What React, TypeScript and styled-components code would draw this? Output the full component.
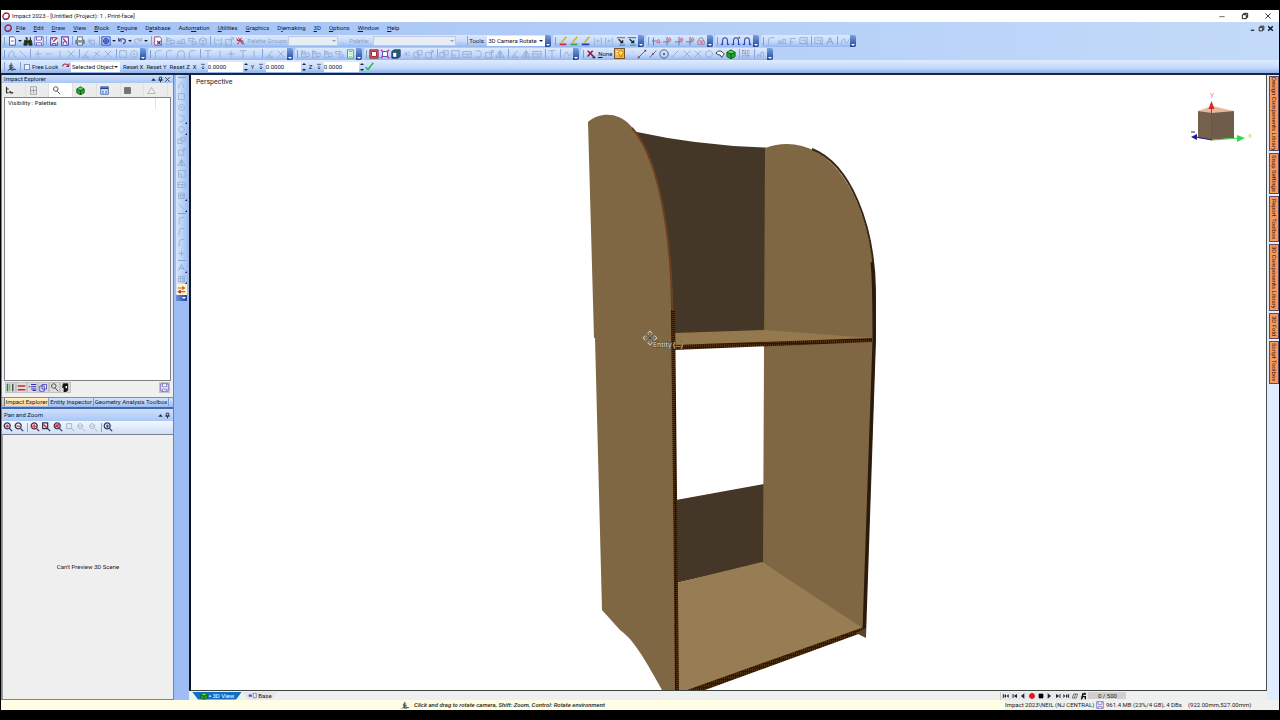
import React from 'react';
import styled, { createGlobalStyle } from 'styled-components';

const Global = createGlobalStyle`
  * { box-sizing: border-box; }
  html, body { margin: 0; padding: 0; background: #000; }
  body, button, input, select { font-family: Roboto, "Open Sans", sans-serif; font-size: 6px; line-height: 10px; color: #16202e; }
  button { border: 0; margin: 0; padding: 0; background: none; }
  svg { display: block; flex-shrink: 0; }
`;

/* ---------- icons ---------- */

type Stroke = { d: string; c?: string; f?: string; w?: number };
const G = '#8fa9cf';
const K = '#1b2233';
const R = '#d3283a';
const B = '#2440b8';
const N = '#3c3c90';

const glyphs: Record<string, Stroke[]> = {
  doc: [{ d: 'M3 1h5l2 2v8H3z', f: '#fff', c: N }, { d: 'M5 6h3', c: N }],
  binoculars: [{ d: 'M2 5h3v6H1zM7 5h3l1 6H7zM3 2h2v3M8 2h1v3M5 6h2v2H5z', f: '#23301c', c: '#23301c' }],
  save: [{ d: 'M1 1h10v10H1z', f: '#fff', c: '#5b4fb0' }, { d: 'M3 1v4h6V1M3 11V8h6v3', c: '#5b4fb0' }],
  exportA: [{ d: 'M9 2H2v9h8V7', f: '#fff', c: '#5b3fb0', w: 1.3 }, { d: 'M5 7l5-5', c: R, w: 1.6 }, { d: 'M4 11V9h4v2M4 2v3', c: B }],
  exportB: [{ d: 'M2 1h8v10H2z', f: '#fff', c: '#5b3fb0', w: 1.3 }, { d: 'M4 3l3 4', c: R, w: 1.6 }, { d: 'M4 10V7h4v3', c: B }],
  print: [{ d: 'M1 5h10v4H1z', f: '#8a94a0', c: '#56606c' }, { d: 'M3 5V1h6v4M3 8v3h6V8', f: '#eef3fa', c: '#56606c' }],
  stack: [{ d: 'M2 6h4M4 3v6M6 5h4v5H6z', c: G }],
  globe: [{ d: 'M1 1h10v10H1z', f: '#b7cffa', c: '#2747a8' }, { d: 'M6 3a3 3 0 1 0 .1 0M3 6h6M6 3v6', c: B, w: 1.3 }],
  undo: [{ d: 'M2 2v4h4M2 6c3-4 8-3 8 0s-2 3-3 3', c: N, w: 1.3 }],
  redo: [{ d: 'M10 2v4H6M10 6C7 2 2 3 2 6s2 3 3 3', c: G, w: 1.2 }],
  sheet: [{ d: 'M2 1h6l2 2v8H2z', f: '#fff', c: '#a02b62' }, { d: 'M5 6l4 4M9 6l-4 4', c: B, w: 1.5 }],
  align: [{ d: 'M2 1v10M3 3h3v3H3zM7 5h4v4H7zM3 10h5', c: G }],
  flag: [{ d: 'M1 9h10M2 9V6h3v3M7 9V4h3v5', c: G }],
  nodes: [{ d: 'M2 3h5v3H2zM6 7h5v3H6zM7 2l3 3', c: G }],
  cubeOff: [{ d: 'M2 4l4-2 4 2v5l-4 2-4-2zM2 4l4 2 4-2M6 6v5', c: G }],
  link: [{ d: 'M2 2v8h3M10 2v8H7M4 5h4', c: G }],
  people: [{ d: 'M4 2l5 8M2 5l8 1M8 2L3 10', c: R, w: 1.2 }, { d: 'M2 3l2 3M8 6l3 4', c: '#444' }],
  arc: [{ d: 'M2 10C2 4 5 2 10 2', c: G }],
  curve: [{ d: 'M2 10C2 1 8 1 8 5s1 4 3 5', c: G }],
  line: [{ d: 'M2 2l8 8', c: G }],
  plus: [{ d: 'M6 2v8M2 6h8', c: G }],
  minus: [{ d: 'M2 6h8', c: G }],
  vert: [{ d: 'M6 2v8', c: G }],
  cross: [{ d: 'M2 2l8 8M10 2l-8 8', c: G }],
  tang: [{ d: 'M2 10L9 2M2 10h8M5 6l3 4', c: G }],
  perp: [{ d: 'M2 10L9 2M3 4l6 4', c: G }],
  rect: [{ d: 'M2 2h8v8H2z', c: G }],
  circ: [{ d: 'M6 2a4 4 0 1 0 .1 0M6 5v2M5 6h2', c: G }],
  corner: [{ d: 'M3 11V5q0-3 3-3h4', c: G }],
  arch: [{ d: 'M2 11V5q0-3 4-3t4 3v6', c: G }],
  tee: [{ d: 'M2 2h8M6 2v9', c: G }],
  boxes: [{ d: 'M1 4h6v6H1zM5 2h6v5H5z', c: G }],
  boxIn: [{ d: 'M2 2h9v9H2zM2 7h4v4', c: G }],
  wide: [{ d: 'M1 3h10v7H1zM1 6h10M7 6v4', c: G }],
  dee: [{ d: 'M3 2h2q5 0 5 4t-5 4H3', c: G }],
  turn: [{ d: 'M2 4h7v7H2zM6 7l5-5M8 2h3v3', c: G }],
  mirror: [{ d: 'M6 1v10M5 3v7H1zM7 3v7h4z', c: G }],
  hatch: [{ d: 'M2 3h8v7H2zM2 6h8M5 3v7M8 3v7', c: G }],
  calc: [{ d: 'M3 1h7v10H3z', f: '#e8fff0', c: '#279b62' }, { d: 'M5 3h3M5 6h1M5 9h1M7 6h1M7 9h1', c: '#279b62' }],
  redBox: [{ d: 'M1 1h10v10H1z', f: '#e0606a', c: '#8c1822' }, { d: 'M3 3h6v6H3z', f: '#fff', c: '#8c1822' }],
  pinkBox: [{ d: 'M3 3h6v6H3z', f: '#fff', c: B }, { d: 'M1 1l3 3M11 1L8 4M1 11l3-3M11 11L8 8', c: '#cf2aa4', w: 1.6 }],
  tealBox: [{ d: 'M1 3l3-2h7v8l-3 2H1z', f: '#1b6a6e', c: '#142c76' }, { d: 'M2 4h5v6H2z', f: '#fff', c: '#142c76' }],
  zig: [{ d: 'M2 8l3-4v4l4-5M7 9l3-3', c: G }],
  penRed: [{ d: 'M4 8l6-7', c: '#dfaa2c', w: 1.8 }, { d: 'M2 10h8', c: R, w: 2 }],
  penGreen: [{ d: 'M4 8l6-7', c: '#dfaa2c', w: 1.8 }, { d: 'M2 10h8', c: '#2fb04a', w: 2 }],
  penBlue: [{ d: 'M4 8l6-7', c: '#dfaa2c', w: 1.8 }, { d: 'M1 10h9', c: '#1c3ec0', w: 2 }],
  bars: [{ d: 'M2 2v8M10 2v8M4 6h4M6 4v4', c: G }],
  swapA: [{ d: 'M1 2h10', c: '#d9606c', w: 1.5 }, { d: 'M3 4l5 4M8 5v3H5', c: K, w: 1.5 }, { d: 'M4 11h7', c: '#2f9f9a', w: 1.5 }],
  swapB: [{ d: 'M1 2h10', c: '#3c9f5a', w: 1.5 }, { d: 'M3 4l5 4M8 5v3H5', c: K, w: 1.5 }, { d: 'M4 11h7', c: '#2f9f9a', w: 1.5 }],
  dim: [{ d: 'M3 2v9M1 6h6', c: '#5a6c94' }, { d: 'M7 8l2-4 2 4z', c: '#c8546a' }],
  dimB: [{ d: 'M6 1v10M1 7h9', c: '#5a6c94' }, { d: 'M7 5l2-3 2 3z', c: '#c8546a' }],
  lock: [{ d: 'M2 6h8v4H2zM3 6q0-4 3-4t3 4', c: '#a37390' }, { d: 'M5 8h3', c: R }],
  wave: [{ d: 'M1 10h2V6q0-4 3-4t3 4v4h2', c: '#2b46b4', w: 1.3 }],
  waveDot: [{ d: 'M1 10h2V6q0-4 3-4t3 4v4h2', c: '#2b46b4', w: 1.3 }, { d: 'M9 2h2', c: R, w: 2 }],
  letterF: [{ d: 'M3 11V3h6M3 7h4', c: G }],
  letterA: [{ d: 'M2 10L6 2l4 8M4 7h4', c: G, w: 1.3 }],
  table: [{ d: 'M1 2h9v7H1zM3 5h5v4M8 9l3 2', c: G }],
  squiggle: [{ d: 'M1 9c3-7 4-7 5-3s3 3 5-2', c: G }],
  redX: [{ d: 'M2 2l7 7M8 2L2 9', c: '#8d1530', w: 1.8 }, { d: 'M8 10h3', c: K, w: 2 }],
  bulb: [{ d: 'M7 2a2.5 2.5 0 0 1 1 5v2H6V7a2.5 2.5 0 0 1 1-5z', f: '#ffe23c', c: '#b37a12' }, { d: 'M1 3h3M1 6h3', c: '#fff' }],
  dots: [{ d: 'M3 8h1M7 4h1', c: G }],
  segment: [{ d: 'M2 10l8-8', c: '#4a5468' }, { d: 'M1 10h2M9 2h2', c: '#9c2740', w: 2 }],
  mid: [{ d: 'M2 10l8-8', c: '#4a5468' }, { d: 'M5 6h2', c: '#9c2740', w: 2 }],
  centre: [{ d: 'M6 1a5 5 0 1 0 .1 0', c: '#465064' }, { d: 'M5 6h2', c: K, w: 2 }],
  ring: [{ d: 'M6 2a4 4 0 1 0 .1 0', c: G }],
  slash: [{ d: 'M2 10l8-8', c: G }],
  shell: [{ d: 'M1 5q5-6 10 1L8 10 6 7 4 7z', f: '#fff', c: K }],
  cube: [{ d: 'M1 4l5-3 5 3v5l-5 3-5-3z', f: '#25a02c', c: '#0b5a16' }, { d: 'M1 4l5 2 5-2M6 6v6', c: '#0b4a12' }, { d: 'M2 4l4-2 4 2-4 1z', f: '#59dc4f', c: 'none' }],
  grid: [{ d: 'M1 2h10M1 5h10M1 8h10M2 1v10M5 1v10M8 1v10', c: '#a4acc8' }, { d: 'M2 2h1M5 5h1M8 8h1', c: R }],
  stairs: [{ d: 'M2 10V7h3v3M6 10V4h3v6', c: G }],
  axes: [{ d: 'M5 1v7L1 10M5 8l6 1M3 4h4M3 7l5-1M3 4l2 6 4-1', c: '#25304a' }],
  rotate: [{ d: 'M2 6c1-5 7-4 8 0M7 6h3l1-4', c: '#a12944', w: 1.4 }],
  spin: [{ d: 'M3 2h6M6 4v5M4 7l2 2 2-2', c: '#3b4864', w: 1.2 }],
  check: [{ d: 'M1 7l3 3 7-9', c: '#20b83a', w: 1.8 }],
  tree: [{ d: 'M2 1v8h3M2 4h3M6 7l4 3M6 9h5', c: '#2b2b2b', w: 1.5 }],
  form: [{ d: 'M2 1h8v10H2zM2 6h8M6 3v6', c: '#8a8f98' }],
  magnifier: [{ d: 'M5 1a3 3 0 1 0 .1 0M7 7l4 4', c: '#4a4a4a', w: 1.3 }],
  window: [{ d: 'M1 1h10v10H1z', f: '#dfe9ff', c: '#1d4693' }, { d: 'M1 3h10', c: '#1d4693', w: 2.4 }, { d: 'M3 7h2M7 7h2M3 9h2M7 9h2', c: '#1d4693' }],
  filled: [{ d: 'M2 2h8v8H2z', f: '#737373', c: '#666' }],
  triangle: [{ d: 'M6 2l5 8H1z', c: '#a5a5a5' }],
  stripes: [{ d: 'M2 1v10', c: '#23824a', w: 2 }, { d: 'M5 1v10', c: '#8ccf3c', w: 2 }, { d: 'M9 1v10', c: '#48566e', w: 2 }],
  redBars: [{ d: 'M1 4h10M1 9h10', c: '#c92a28', w: 2.2 }],
  list: [{ d: 'M4 2h7M4 5h7M4 8h7M6 10h5M1 5h2', c: '#342fb4', w: 1.4 }],
  copies: [{ d: 'M1 4h6v7H1zM4 2h6v6H4z', f: '#e4e8ff', c: '#342fb4' }],
  mask: [{ d: 'M3 1h6v9H7v2H4V6H2z', f: '#111', c: '#111' }, { d: 'M6 4h2v3H6z', f: '#fff', c: 'none' }],
  zoomIn: [{ d: 'M5 1a3.6 3.6 0 1 0 .1 0M8 8l3 3', c: '#30344a', w: 1.5 }, { d: 'M3 5h4M5 3v4', c: R, w: 1.4 }],
  zoomOut: [{ d: 'M5 1a3.6 3.6 0 1 0 .1 0M8 8l3 3', c: '#30344a', w: 1.5 }, { d: 'M3 5h4', c: R, w: 1.4 }],
  zoomAll: [{ d: 'M5 1a3.6 3.6 0 1 0 .1 0M8 8l3 3', c: '#30344a', w: 1.5 }, { d: 'M1 5h8M5 1v8', c: R, w: 1.2 }],
  zoomBox: [{ d: 'M2 1h6v7H2zM8 8l3 3', c: '#30344a', w: 1.5 }, { d: 'M3 3l4 4', c: R, w: 1.8 }],
  zoomNo: [{ d: 'M5 1a3.6 3.6 0 1 0 .1 0M8 8l3 3', c: '#30344a', w: 1.5 }, { d: 'M2 7l6-5M3 3l4 4', c: R, w: 1.8 }],
  zoomOff: [{ d: 'M5 2a3 3 0 1 0 .1 0M8 8l3 3M3 5h4', c: '#9ba7b8' }],
  zoomOffBox: [{ d: 'M2 2h6v6H2zM8 8l3 3', c: '#9ba7b8' }],
  zoomBlue: [{ d: 'M5 1a3.6 3.6 0 1 0 .1 0M8 8l3 3', c: '#30344a', w: 1.5 }, { d: 'M5 3v4M4 5h3', c: B, w: 1.6 }],
  swap: [{ d: 'M1 4h9M7 2l3 2-3 2', c: '#d0661e', w: 1.6 }, { d: 'M11 9H2M5 7L2 9l3 2', c: '#b93024', w: 1.6 }],
  pin: [{ d: 'M4 2h4v5H4zM2 7h8M6 7v4', c: '#222a3c', w: 1.5 }],
  up: [{ d: 'M2 8l4-4 4 4z', f: '#222a3c', c: 'none' }],
  close: [{ d: 'M2 2l8 8M10 2l-8 8', c: '#27344e', w: 1.4 }],
  min: [{ d: 'M2 7h8', c: '#222' }],
  minBold: [{ d: 'M3 9h6', c: '#10182c', w: 2 }],
  restore: [{ d: 'M2 4h6v6H2zM4 4V2h6v6H8', c: '#111', w: 1.4 }],
  closeBold: [{ d: 'M2 2l8 8M10 2l-8 8', c: '#10182c', w: 2.4 }],
  first: [{ d: 'M2 3v6', c: K, w: 1.4 }, { d: 'M6 3v6L3 6zM10 3v6L7 6z', f: K, c: 'none' }],
  prev: [{ d: 'M3 3v6', c: K, w: 1.4 }, { d: 'M9 3v6L4 6z', f: K, c: 'none' }],
  back: [{ d: 'M8 2v8L3 6z', f: K, c: 'none' }],
  record: [{ d: 'M6 2a4 4 0 1 0 .1 0', f: '#dd1616', c: '#dd1616' }],
  stop: [{ d: 'M3 3h6v6H3z', f: '#000', c: '#000' }],
  play: [{ d: 'M4 2v8l5-4z', f: K, c: 'none' }],
  next: [{ d: 'M9 3v6', c: K, w: 1.4 }, { d: 'M3 3v6l5-3z', f: K, c: 'none' }],
  last: [{ d: 'M10 3v6', c: K, w: 1.4 }, { d: 'M2 3v6l3-3zM6 3v6l3-3z', f: K, c: 'none' }],
  loop: [{ d: 'M2 9l2-6h6L8 9zM5 9l2-6', c: '#444' }],
  runner: [{ d: 'M3 3h6M5 3l-2 4h5v4M4 7l-2 4M7 1v3', c: '#111', w: 2 }],
  layers: [{ d: 'M1 6h4', c: '#5a3fc8', w: 3 }, { d: 'M7 3h4v6H7z', f: '#efeaff', c: '#7a63c8' }],
};

const Icon = ({ name, size = 10 }: { name: string; size?: number }) => (
  <svg width={size} height={size} viewBox="0 0 12 12" fill="none" aria-hidden="true">
    {(glyphs[name] || []).map((s, i) => (
      <path key={i} d={s.d} stroke={s.c} fill={s.f || 'none'} strokeWidth={s.w || 1} />
    ))}
  </svg>
);

/* ---------- frame ---------- */

const Screen = styled.div`
  min-height: 100vh; padding: 10px 1px; background: #000;
  display: flex; flex-direction: column;
`;
const Shell = styled.div`flex: 1; display: flex; flex-direction: column; background: #a0bff4; min-width: 0;`;
const TitleBar = styled.header`
  height: 12px; padding: 0 7px 0 1px; display: flex; align-items: center; gap: 2px; background: #fff; color: #222;
`;
const Title = styled.h1`margin: 0; font-size: 6px; line-height: 12px; font-weight: 400; flex: 1; white-space: nowrap;`;
const WindowButtons = styled.div<{ $gap: number }>`display: flex; align-items: center; gap: ${p => p.$gap}px;`;
const WinButton = styled.button`display: flex; align-items: center; justify-content: center;`;

const MenuBar = styled.nav`
  height: 12px; padding: 0 5px 0 3px; display: flex; align-items: center;
  background: linear-gradient(90deg, #a3c1f5, #c3daf9);
`;
const MenuItems = styled.div`display: flex; align-items: center; flex: 1; gap: 8px; padding-left: 4px;`;
const MenuItem = styled.button`line-height: 12px; white-space: nowrap; color: #0c1a3a;`;

const Bar = styled.div<{ $plain?: boolean }>`
  height: 13px; display: flex; align-items: center; gap: ${p => (p.$plain ? 1 : 2)}px; padding: 0 1px; min-width: 0;
  background: ${p => (p.$plain ? 'linear-gradient(#deebff, #c4dafa 60%, #8db2ee)' : 'linear-gradient(90deg, #a3c1f5, #c3daf9)')};
`;
const Group = styled.div<{ $w: number }>`
  flex: 0 0 ${p => p.$w}px; height: 12px; display: flex; align-items: center; overflow: hidden;
  border-radius: 2px; background: linear-gradient(#dce9fe, #c5dafa 55%, #94b6ee);
  &::before { content: ''; flex: 0 0 1px; height: 8px; margin: 0 1px 0 2px; background: #7b9bd2; }
`;
const Tool = styled.button<{ $hot?: boolean }>`
  flex: 1 1 11px; min-width: 0; height: 11px; display: flex; align-items: center; justify-content: center;
  ${p => p.$hot && 'background: #f8b04e; border: 1px solid #74552f;'}
`;
const Sep = styled.span`flex: 0 0 1px; height: 9px; margin: 0 1px 0 2px; background: #86a4d8;`;
const Caret = styled.span`
  flex: 0 0 5px; display: flex; justify-content: center;
  &::after { content: ''; border: 2px solid transparent; border-top-color: #1c2538; border-bottom: 0; }
`;
const Overflow = styled.span`
  flex: 0 0 6px; align-self: stretch; margin-left: auto; display: flex; align-items: flex-end; justify-content: center;
  background: linear-gradient(#7ba0e2, #1f4796); padding-bottom: 1px;
  &::after { content: ''; border: 2px solid transparent; border-top-color: #fff; border-bottom: 0; }
`;
const Label = styled.label<{ $off?: boolean; $w?: number }>`
  white-space: nowrap; flex: 0 0 ${p => (p.$w ? p.$w + 'px' : 'auto')};
  color: ${p => (p.$off ? '#8b9fc0' : '#101828')};
`;
const PickBox = styled.span<{ $w: number; $off?: boolean }>`
  position: relative; flex: 0 0 ${p => p.$w}px; height: 10px; display: flex; align-items: center;
  background: ${p => (p.$off ? '#e8edf4' : '#fff')}; border: 1px solid ${p => (p.$off ? '#bccbe2' : '#fff')};
  &::after {
    content: ''; position: absolute; right: 1px; top: 3px; border: 2px solid transparent; border-bottom: 0;
    border-top-color: ${p => (p.$off ? '#8b9fc0' : '#1c2538')};
  }
`;
const Pick = styled.select`
  appearance: none; width: 100%; height: 8px; padding: 0; border: 0; background: none; line-height: 8px; color: #101828;
`;
const Check = styled.input`appearance: none; margin: 0 1px; width: 6px; height: 6px; border: 1px solid #8294b4; background: #eef4ff;`;
const Field = styled.input`
  flex: 0 0 35px; width: 35px; height: 10px; border: 0; padding: 0; background: #fff; color: #101828;
`;
const Spinner = styled.span`
  flex: 0 0 4px; height: 8px; display: flex; flex-direction: column; justify-content: space-between; align-items: center;
  &::before { content: ''; border: 2px solid transparent; border-top: 0; border-bottom-color: #1c2538; }
  &::after { content: ''; border: 2px solid transparent; border-bottom: 0; border-top-color: #1c2538; }
`;
const TextButton = styled.button<{ $w: number }>`
  flex: 0 0 ${p => p.$w}px; padding-left: 2px; white-space: nowrap; text-align: left; color: #101828;
`;
const Underlined = styled.span`text-decoration: underline;`;

/* ---------- body ---------- */

const Body = styled.main`flex: 1; display: flex; border-top: 2px solid #1a2740; min-height: 0;`;
const Dock = styled.aside`
  flex: 0 0 173px; min-width: 0; display: flex; flex-direction: column; background: #f0f0f0;
  border: 1px solid #5f86c8; border-top: 0;
`;
const DockHeader = styled.h2<{ $h: number }>`
  margin: 0; height: ${p => p.$h}px; padding: 0 2px; display: flex; align-items: center;
  font-size: 6px; line-height: 8px; font-weight: 400; background: linear-gradient(#cfe0fb, #a9c7f5); color: #0d1a34;
`;
const Grow = styled.span`flex: 1;`;
const DockTabs = styled.div`height: 14px; display: flex; background: #ececec; padding-right: 5px;`;
const DockTab = styled.button<{ $on?: boolean }>`
  flex: 1; display: flex; align-items: center; justify-content: center; padding-right: 8px;
  background: ${p => (p.$on ? '#fff' : '#ececec')}; border-right: 1px solid #e0e0e0;
`;
const ListPane = styled.div`
  flex: 0 0 284px; margin: 0 2px; border: 1px solid #7d828a; background: #fff; display: flex; line-height: 10px;
`;
const ListName = styled.div`flex: 1; padding-left: 3px; color: #222;`;
const ListEdge = styled.div`flex: 0 0 15px; height: 11px; border-left: 1px solid #e3e3e3;`;
const PaneTools = styled.div`height: 16px; padding: 1px 3px 0; display: flex; align-items: flex-start;`;
const PaneTool = styled.button`
  width: 11px; height: 11px; display: flex; align-items: center; justify-content: center;
  background: #dcdcdc; border: 1px solid #c4c4c4;
`;
const PaneTabs = styled.div`
  height: 12px; display: flex; align-items: stretch; padding: 0 2px 1px;
  background: linear-gradient(#d6e5fc, #9dbdf0); border-top: 1px solid #6a8fd0; border-bottom: 2px solid #4169b0;
`;
const PaneTab = styled.button<{ $on?: boolean; $w: number }>`
  flex: 0 0 ${p => p.$w}px; line-height: 8px; white-space: nowrap; border-right: 1px solid #7f9dcb;
  ${p => p.$on && 'background: linear-gradient(#fff0c8, #ffd590); border-left: 1px solid #8b7446;'}
`;
const ZoomStrip = styled.div`height: 13px; background: linear-gradient(#f2f7ff, #cfdff8);`;
const ZoomTools = styled.div`width: 112px; height: 12px; display: flex; align-items: center;`;
const ZoomTool = styled.button`flex: 1; display: flex; justify-content: center;`;
const Preview = styled.div`
  flex: 1; border-top: 1px solid #7d828a; border-left: 1px solid #9aa0a8; background: #efefef;
  display: flex; align-items: center; justify-content: center; color: #222;
`;
const SideBar = styled.div`flex: 0 0 15px; padding: 0 2px; background: #9ebdf4;`;
const SideTools = styled.div`
  width: 11px; display: flex; flex-direction: column; align-items: center; padding-top: 2px;
  background: linear-gradient(90deg, #d8e6fd, #a5c3f4);
  &::before { content: ''; width: 8px; height: 1px; background: #7b9bd2; margin-bottom: 2px; }
`;
const SideTool = styled.button<{ $hot?: boolean; $more?: boolean }>`
  position: relative; width: 10px; height: 11px; display: flex; align-items: center; justify-content: center;
  background: ${p => (p.$hot ? '#fdf3cf' : 'none')};
  ${p => p.$more && `&::after { content: ''; position: absolute; right: 0; bottom: 0; border: 1px solid #1c2538; border-top-color: transparent; border-left-color: transparent; }`}
`;
const SideSep = styled.span`width: 8px; height: 1px; margin: 1px 0; background: #86a4d8;`;
const SideEnd = styled.span`
  align-self: stretch; height: 6px; background: linear-gradient(90deg, #6c92da, #1f4796);
  display: flex; justify-content: flex-end; align-items: center; padding-right: 1px;
  &::after { content: ''; border: 2px solid transparent; border-top-color: #fff; border-bottom: 0; }
`;
const View = styled.section`flex: 1; min-width: 0; display: flex; flex-direction: column; background: #eef0f0;`;
const Canvas = styled.div`
  position: relative; flex: 1; min-height: 0; background: #fff; overflow: hidden;
  border-left: 2px solid #10141c; border-right: 1px solid #4c504c; border-bottom: 1px solid #3c443c;
  > svg { position: absolute; inset: 0; width: 100%; height: 100%; }
`;
const CameraName = styled.span`position: absolute; left: 5px; top: 2px; font-size: 7px; color: #222;`;
const ViewTabs = styled.div`height: 9px; display: flex; align-items: center; padding-left: 3px;`;
const ViewTab = styled.button<{ $on?: boolean; $w: number }>`
  width: ${p => p.$w}px; height: 8px; display: flex; align-items: center; justify-content: center; gap: 1px; line-height: 8px;
  clip-path: polygon(0 0, 100% 0, calc(100% - 6px) 100%, 6px 100%);
  background: ${p => (p.$on ? '#0f6fc4' : '#e2e4e8')}; color: ${p => (p.$on ? '#fff' : '#222')};
`;
const Player = styled.div`display: flex; align-items: center; border-left: 1px solid #c8c8c8; padding-left: 1px; margin-right: 141px;`;
const PlayerButtons = styled.div`width: 86px; display: flex; align-items: center;`;
const PlayerButton = styled.button`
  flex: 1; height: 8px; display: flex; align-items: center; justify-content: center; background: #e6e8e9;
`;
const Frame = styled.output`width: 38px; height: 7px; line-height: 7px; padding-left: 10px; background: #cfcfcf; color: #222;`;

const RightDock = styled.aside`
  flex: 0 0 12px; background: #dfecff; padding: 1px 0 0 2px; display: flex; flex-direction: column; gap: 2px;
`;
const RightTab = styled.button<{ $h: number }>`
  width: 10px; flex: 0 0 ${p => p.$h}px; min-height: 0; writing-mode: vertical-rl; text-align: center; line-height: 8px;
  white-space: nowrap; background: #f79a58; border: 1px solid #5d4a68; color: #1c1420;
`;

const StatusBar = styled.footer`height: 10px; display: flex; background: #f0f1ee; color: #222; line-height: 10px; white-space: nowrap;`;
const Hint = styled.div`
  flex: 1; display: flex; align-items: center; justify-content: center; gap: 4px; background: #fffde4;
  font-style: italic; font-weight: 500;
`;
const StatusCell = styled.div<{ $w: number }>`flex: 0 0 ${p => p.$w}px; display: flex; align-items: center; gap: 2px;`;

/* ---------- data ---------- */

const menus = [
  ['', 'F', 'ile'], ['', 'E', 'dit'], ['', 'D', 'raw'], ['', 'V', 'iew'], ['', 'B', 'lock'], ['E', 'n', 'quire'],
  ['D', 'a', 'tabase'], ['Auto', 'm', 'ation'], ['', 'U', 'tilities'], ['', 'G', 'raphics'], ['D', 'i', 'emaking'],
  ['', '3', 'D'], ['', 'O', 'ptions'], ['', 'W', 'indow'], ['', 'H', 'elp'],
];

const Tools = ({ items }: { items: string }) => (
  <>
    {items.split(' ').map((n, i) =>
      n === '|' ? <Sep key={i} /> : n === 'v' ? <Caret key={i} /> : (
        <Tool key={i} $hot={n === 'bulb'} aria-label={n}><Icon name={n} /></Tool>
      ),
    )}
  </>
);

const topGroups: [number, string][] = [
  [91, 'penRed penGreen penBlue bars bars swapA swapB'],
  [67, 'dim dimB dimB dimB lock'],
  [44, 'wave waveDot wave'],
  [95, 'corner flag letterF table | table letterA | squiggle'],
];
const drawGroups: [number, string][] = [
  [144, 'curve line | plus minus vert cross | tang perp cross | rect circ'],
  [145, 'corner corner arch corner | tee vert plus tee vert | tang cross'],
  [67, 'align align align nodes calc'],
  [215, 'redBox pinkBox tealBox zig boxes turn | boxes boxIn wide dee turn mirror | tang mirror wide | tee | squiggle'],
];

const sideTools = ['curve', 'rect', 'circ', 'dee+', 'ring+', 'boxes', 'turn', 'mirror', 'boxIn', 'wide', 'hatch+', 'line+', '|',
  'corner', 'corner', 'corner', 'plus', '|', 'letterA+', 'hatch+', 'swap'];

const rightTabs: [string, number][] = [
  ['Design Components Library', 75], ['Snap Settings', 41], ['Report Toolbox', 46],
  ['3D Components Library', 67], ['3D Fold', 26], ['Script Toolbox', 43],
];

const Logo = ({ size }: { size: number }) => (
  <svg width={size} height={size} viewBox="0 0 12 12" fill="none" aria-hidden="true">
    <path d="M9 2C4 0 0 5 2 9s8 2 9-3c0-2-1-3-2-4" stroke="#b01f38" strokeWidth="2" />
    <path d="M3 10c4 2 8-1 8-5" stroke="#46508c" strokeWidth="1.4" />
  </svg>
);

const Scene = () => (
  <svg viewBox="191 75 1075 615" preserveAspectRatio="xMidYMid slice" role="img" aria-label="Cardboard display stand">
    <defs>
      <pattern id="flute" width="4" height="2" patternUnits="userSpaceOnUse">
        <rect width="4" height="2" fill="#24160a" /><rect width="3" height="1" fill="#50351a" />
      </pattern>
      <pattern id="fluteH" width="2" height="4" patternUnits="userSpaceOnUse">
        <rect width="2" height="4" fill="#2c180a" /><rect width="1" height="3" fill="#4e3015" />
      </pattern>
    </defs>
    <path d="M632 131Q700 146 766 147.500V332L672 336Z" fill="#443727" />
    <path d="M676 500L764 484V563L676 583Z" fill="#443727" />
    <path d="M765 148Q784 141 802 146C846 157 873 220 875 290L865 633L763 563Z" fill="#7f6744" />
    <path d="M812 149C850 164 874 224 875 290V340L865 637" fill="none" stroke="#3a2613" strokeWidth="2" />
    <path d="M872 262C874 280 874 300 874 340L864 630" fill="none" stroke="#2b1a0c" strokeWidth="3" />
    <path d="M674 333L765 330L872 338L872 342L674 348Z" fill="#94794f" />
    <path d="M674 345L872 338V342L674 350Z" fill="url(#fluteH)" />
    <path d="M676 583L762 562L864 629L690 690H676Z" fill="#987d54" />
    <path d="M864 627V632L705 690H687Z" fill="url(#fluteH)" />
    <path d="M856 633L866 628V638Z" fill="#5a442c" />
    <path d="M588 122C600 112 618 112 630 125C656 150 671 220 673 310L678 690H662C640 650 632 639 620 630L602 610L595 338L594 338Z" fill="#7f6744" />
    <path d="M632 128C656 154 671 222 672 310" fill="none" stroke="#6a4020" strokeWidth="2" />
    <path d="M671 310h4l2 180l2 200h-4l-2-200z" fill="url(#flute)" />
    <g stroke="#d8d2c6" fill="none">
      <path d="M650 332v12M644 338h12M648 334l2-2 2 2M648 342l2 2 2-2M646 336l-2 2 2 2M654 336l2 2-2 2" strokeWidth="2" />
      <path d="M650 333v10M645 338h10" stroke="#1b1b1b" />
      <path d="M648 334l2-2 2 2M648 342l2 2 2-2M646 336l-2 2 2 2M654 336l2 2-2 2" stroke="#3a332a" strokeWidth="0.500" />
    </g>
    <text x="653" y="347" fontSize="7" fontFamily="Open Sans, sans-serif" fill="#e6e2da" stroke="#4f4536" strokeWidth="1" paintOrder="stroke">Entity (...)</text>
    <path d="M1198 111l14-5 22 5-22 3z" fill="#e4b99e" />
    <path d="M1198 111l14 2v27l-14-2z" fill="#75604c" />
    <path d="M1212 113l22-2v27l-22 2z" fill="#6f5c4b" />
    <path d="M1211.500 140V107" stroke="#e02222" strokeWidth="1" />
    <path d="M1211.500 101l3 8h-6z" fill="#e02222" />
    <path d="M1212 140l28-2" stroke="#35d84c" />
    <path d="M1237 135l8 3-8 4z" fill="#35d84c" />
    <path d="M1212 140l-16-3" stroke="#1b1b9a" />
    <path d="M1191 137l6-3v6z" fill="#1b1b9a" />
    <path d="M1191 132h4" stroke="#1b1b9a" />
    <text x="1210" y="98" fontSize="7" fontFamily="Open Sans, sans-serif" fill="#e25a5a">Y</text>
    <text x="1248" y="138" fontSize="6" fontFamily="Open Sans, sans-serif" fill="#5fdc74">X</text>
  </svg>
);

const AxisRow = styled.div`display: flex; align-items: center; gap: 1px; flex: 0 0 57px; padding-left: 2px;`;
const Axis = ({ name }: { name: string }) => (
  <AxisRow>
    <Label htmlFor={`axis-${name}`} $w={5}>{name}</Label>
    <Icon name="spin" size={8} />
    <Field id={`axis-${name}`} defaultValue="0.0000" />
    <Spinner />
  </AxisRow>
);

export default function App() {
  return (
    <Screen>
      <Global />
      <Shell>
        <TitleBar>
          <Logo size={8} />
          <Title>Impact 2023 - [Untitled (Project): 1 , Print-face]</Title>
          <WindowButtons $gap={15}>
            {['min', 'restore', 'close'].map(n => <WinButton key={n} aria-label={n}><Icon name={n} size={8} /></WinButton>)}
          </WindowButtons>
        </TitleBar>

        <MenuBar>
          <Logo size={8} />
          <MenuItems>
            {menus.map(([a, u, b]) => <MenuItem key={a + u + b}>{a}<Underlined>{u}</Underlined>{b}</MenuItem>)}
          </MenuItems>
          <WindowButtons $gap={2}>
            {['minBold', 'restore', 'closeBold'].map(n => <WinButton key={n} aria-label={n}><Icon name={n} size={7} /></WinButton>)}
          </WindowButtons>
        </MenuBar>

        <Bar>
          <Group $w={549}>
            <Tools items="doc v binoculars save | exportA exportB | print stack | globe v undo v redo v | sheet align flag nodes cubeOff | link turn people" />
            <Label htmlFor="pg" $off $w={41}>&nbsp;Palette Groups:</Label>
            <PickBox $w={50} $off><Pick id="pg" disabled /></PickBox>
            <Label as="span" $off $w={11}>&nbsp;...</Label>
            <Label htmlFor="pal" $off $w={24}>Palette:</Label>
            <PickBox $w={83} $off><Pick id="pal" disabled /></PickBox>
            <Label as="span" $off $w={9}>&nbsp;...</Label>
            <Sep />
            <Label htmlFor="tools" $w={18}>Tools:</Label>
            <PickBox $w={58}><Pick id="tools"><option>3D Camera Rotate</option></Pick></PickBox>
            <Overflow />
          </Group>
          {topGroups.map(([w, items], i) => <Group key={i} $w={w}><Tools items={items} /><Overflow /></Group>)}
        </Bar>

        <Bar>
          {drawGroups.map(([w, items], i) => <Group key={i} $w={w}><Tools items={items} /><Overflow /></Group>)}
          <Group $w={192}>
            <Tools items="redX" />
            <TextButton $w={18}><Underlined>N</Underlined>one</TextButton>
            <Tools items="bulb dots segment mid centre slash cross cross ring shell cube | grid | stairs" />
            <Overflow />
          </Group>
        </Bar>

        <Bar $plain>
          <Sep />
          <Icon name="axes" />
          <Sep />
          <Check type="checkbox" id="free" />
          <Label htmlFor="free" $w={28}>Free Look</Label>
          <Icon name="rotate" size={9} />
          <PickBox $w={49}><Pick aria-label="Rotate about"><option>Selected Object</option></Pick></PickBox>
          <TextButton $w={22}>Reset X</TextButton>
          <TextButton $w={22}>Reset Y</TextButton>
          <TextButton $w={22}>Reset Z</TextButton>
          <Axis name="X" />
          <Axis name="Y" />
          <Axis name="Z" />
          <Icon name="check" size={9} />
        </Bar>

        <Body>
          <Dock>
            <DockHeader $h={8}>Impact Explorer<Grow /><Icon name="up" size={7} /><Icon name="pin" size={7} /><Icon name="close" size={7} /></DockHeader>
            <DockTabs>
              {['tree', 'form', 'magnifier', 'cube', 'window', 'filled', 'triangle'].map(n => (
                <DockTab key={n} $on={n === 'magnifier'} aria-label={n}><Icon name={n} size={9} /></DockTab>
              ))}
            </DockTabs>
            <ListPane><ListName>Visibility : Palettes</ListName><ListEdge /></ListPane>
            <PaneTools>
              {['stripes', 'redBars', 'list', 'copies', 'magnifier', 'mask'].map(n => (
                <PaneTool key={n} aria-label={n}><Icon name={n} size={9} /></PaneTool>
              ))}
              <Grow />
              <PaneTool aria-label="save"><Icon name="save" size={9} /></PaneTool>
            </PaneTools>
            <PaneTabs>
              <PaneTab $on $w={45}>Impact Explorer</PaneTab>
              <PaneTab $w={45}>Entity Inspector</PaneTab>
              <PaneTab $w={75}>Geometry Analysis Toolbox</PaneTab>
            </PaneTabs>
            <DockHeader $h={12}>Pan and Zoom<Grow /><Icon name="up" size={7} /><Icon name="pin" size={7} /></DockHeader>
            <ZoomStrip>
              <ZoomTools>
                {['zoomIn', 'zoomOut', '|', 'zoomAll', 'zoomBox', 'zoomNo', 'zoomOffBox', 'zoomOff', 'zoomOff', '|', 'zoomBlue'].map((n, i) =>
                  n === '|' ? <Sep key={i} /> : <ZoomTool key={i} aria-label={n}><Icon name={n} /></ZoomTool>)}
              </ZoomTools>
            </ZoomStrip>
            <Preview>Can't Preview 3D Scene</Preview>
          </Dock>

          <SideBar>
            <SideTools>
              {sideTools.map((n, i) => n === '|' ? <SideSep key={i} /> : (
                <SideTool key={i} $hot={n === 'swap'} $more={n.endsWith('+')} aria-label={n.replace('+', '')}>
                  <Icon name={n.replace('+', '')} size={9} />
                </SideTool>
              ))}
              <SideEnd />
            </SideTools>
          </SideBar>

          <View>
            <Canvas>
              <Scene />
              <CameraName>Perspective</CameraName>
            </Canvas>
            <ViewTabs>
              <ViewTab $on $w={50}><Icon name="cube" size={8} />▪ 3D View</ViewTab>
              <ViewTab $w={36}><Icon name="layers" size={9} />Base</ViewTab>
              <Grow />
              <Player>
                <PlayerButtons>
                  {['first', 'prev', 'back', 'record', 'stop', 'play', 'next', 'last', 'loop', 'runner'].map(n => (
                    <PlayerButton key={n} aria-label={n}><Icon name={n} size={8} /></PlayerButton>
                  ))}
                </PlayerButtons>
                <Frame>0 / 500</Frame>
              </Player>
            </ViewTabs>
          </View>

          <RightDock>
            {rightTabs.map(([t, h]) => <RightTab key={t} $h={h}>{t}</RightTab>)}
          </RightDock>
        </Body>

        <StatusBar>
          <Hint><Icon name="axes" size={9} />Click and drag to rotate camera, Shift: Zoom, Control: Rotate environment</Hint>
          <StatusCell $w={91}>Impact 2023\NEIL (NJ CENTRAL)</StatusCell>
          <StatusCell $w={92}><Icon name="save" size={8} />961.4 MB (23%/4 GB), 4 DBs</StatusCell>
          <StatusCell $w={91}>(922.00mm,527.00mm)</StatusCell>
        </StatusBar>
      </Shell>
    </Screen>
  );
}
